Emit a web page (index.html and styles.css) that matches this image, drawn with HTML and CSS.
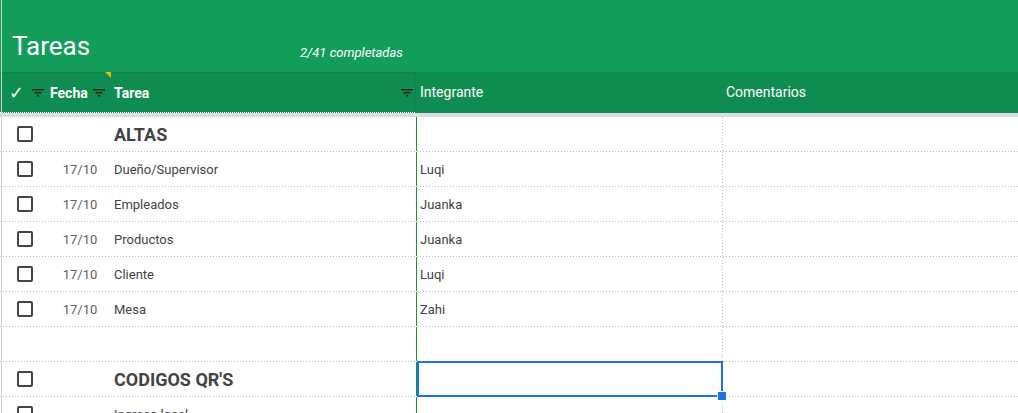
FILE: index.html
```html
<!DOCTYPE html>
<html lang="es">
<head>
<meta charset="utf-8">
<title>Tareas</title>
<link rel="stylesheet" href="styles.css">
</head>
<body>
<div class="sheet">
  <div class="topbar">
    <div class="title">Tareas</div>
    <div class="count">2/41 completadas</div>
  </div>
  <div class="head">
    <div class="frozen-head">
      <div class="hcell hc-check"><span class="tick">✓</span><svg class="filt" viewBox="0 0 12 8" width="12" height="8"><rect x="0" y="0" width="12" height="1.4"/><rect x="2.5" y="3" width="7" height="1.4"/><rect x="4.8" y="6" width="2.4" height="1.4"/></svg></div>
      <div class="hcell hc-date">Fecha<svg class="filt" viewBox="0 0 12 8" width="12" height="8"><rect x="0" y="0" width="12" height="1.4"/><rect x="2.5" y="3" width="7" height="1.4"/><rect x="4.8" y="6" width="2.4" height="1.4"/></svg><span class="note"></span></div>
      <div class="hcell hc-task">Tarea<svg class="filt" viewBox="0 0 12 8" width="12" height="8"><rect x="0" y="0" width="12" height="1.4"/><rect x="2.5" y="3" width="7" height="1.4"/><rect x="4.8" y="6" width="2.4" height="1.4"/></svg></div>
    </div>
    <div class="hcell hc-who">Integrante</div>
    <div class="hcell hc-com">Comentarios</div>
  </div>
  <div class="freeze-gap"></div>
  <div class="body">
    <div class="row"><div class="c-check"><span class="box"></span></div><div class="c-date"></div><div class="c-task section">ALTAS</div><div class="c-who"></div><div class="c-com"></div></div>
    <div class="row"><div class="c-check"><span class="box"></span></div><div class="c-date">17/10</div><div class="c-task">Dueño/Supervisor</div><div class="c-who">Luqi</div><div class="c-com"></div></div>
    <div class="row"><div class="c-check"><span class="box"></span></div><div class="c-date">17/10</div><div class="c-task">Empleados</div><div class="c-who">Juanka</div><div class="c-com"></div></div>
    <div class="row"><div class="c-check"><span class="box"></span></div><div class="c-date">17/10</div><div class="c-task">Productos</div><div class="c-who">Juanka</div><div class="c-com"></div></div>
    <div class="row"><div class="c-check"><span class="box"></span></div><div class="c-date">17/10</div><div class="c-task">Cliente</div><div class="c-who">Luqi</div><div class="c-com"></div></div>
    <div class="row"><div class="c-check"><span class="box"></span></div><div class="c-date">17/10</div><div class="c-task">Mesa</div><div class="c-who">Zahi</div><div class="c-com"></div></div>
    <div class="row"><div class="c-check"></div><div class="c-date"></div><div class="c-task"></div><div class="c-who"></div><div class="c-com"></div></div>
    <div class="row"><div class="c-check"><span class="box"></span></div><div class="c-date"></div><div class="c-task section">CODIGOS QR'S</div><div class="c-who selected"></div><div class="c-com"></div></div>
    <div class="row"><div class="c-check"><span class="box"></span></div><div class="c-date"></div><div class="c-task">Ingreso local</div><div class="c-who"></div><div class="c-com"></div></div>
  </div>
</div>
</body>
</html>
```

FILE: styles.css
```css
* { box-sizing: border-box; }
html, body { margin: 0; padding: 0; background: #fff; }
body {
  font-family: Roboto, "Liberation Sans", Arial, sans-serif;
  width: 1018px;
  height: 413px;
  overflow: hidden;
}
.sheet { position: relative; width: 1018px; }
.sheet::after {
  content: "";
  position: absolute;
  left: 1px; top: 0; bottom: 0;
  width: 1px;
  background: #c7d8cc;
}

.topbar {
  height: 72px;
  background: #129e5a;
  color: #fff;
  display: grid;
  grid-template-columns: 288px auto;
  align-items: end;
  padding: 0 0 11px 12px;
}
.title { font-size: 26px; line-height: 30px; font-weight: 400; }
.count { font-size: 13px; line-height: 16px; font-style: italic; font-weight: 400; }

.head {
  display: grid;
  grid-template-columns: 416px 306px 1fr;
  height: 41px;
  background: #0f8d50;
  color: #fff;
  font-size: 14px;
}
.frozen-head {
  display: grid;
  grid-template-columns: 50px 60px 306px;
  border-top: 1px solid #17804a;
  border-right: 1px solid #17804a;
  background-image: linear-gradient(to right, #ffffff 1px, transparent 1px);
  background-size: 2px 1px;
  background-repeat: repeat-x;
  background-position: left bottom;
}
.hcell {
  display: flex;
  align-items: center;
  height: 40px;
  position: relative;
}
.frozen-head .hcell { height: 39px; font-weight: 700; }
.filt { fill: #1c1c1c; margin-left: auto; flex: none; }
.hc-check { padding: 0 6px 0 9px; }
.tick { font-family: "DejaVu Sans", sans-serif; font-weight: 700; font-size: 18px; line-height: 20px; }
.hc-date { padding: 0 5px 0 0; }
.hc-task { padding: 0 3px 0 4px; }
.hc-who { padding-left: 4px; }
.hc-com { padding-left: 4px; }
.note {
  position: absolute;
  top: -1px; right: -1px;
  width: 0; height: 0;
  border-top: 6px solid #f6b400;
  border-left: 6px solid transparent;
}

.freeze-gap { height: 4px; background: #dcdee4; }

.body { color: #434343; font-size: 13px; }
.row {
  display: grid;
  grid-template-columns: 50px 60px 306px 306px 1fr;
  height: 35px;
  background-image: linear-gradient(to right, #bdbdbd 1px, transparent 1px);
  background-size: 3px 1px;
  background-repeat: repeat-x;
  background-position: left bottom;
}
.row > div {
  height: 34px;
  display: flex;
  align-items: center;
  white-space: nowrap;
}
.c-check { justify-content: center; }
.box {
  width: 16px; height: 16px;
  border: 2px solid #444;
  border-radius: 2px;
}
.c-date { justify-content: center; color: #5f5f5f; }
.c-task { padding-left: 4px; }
.section { font-size: 18px; font-weight: 700; }
.c-who { border-left: 1px solid #1e8e3e; padding-left: 3px; position: relative; }
.c-com {
  padding-left: 4px;
  background-image: linear-gradient(#bdbdbd 1px, transparent 1px);
  background-size: 1px 3px;
  background-repeat: repeat-y;
  background-position: left top;
}
.row > .c-com { height: 35px; }
.selected::after {
  content: "";
  position: absolute;
  top: -1px; left: 0; right: -1px; bottom: -1px;
  border: 2px solid #1a73e8;
}
.selected::before {
  content: "";
  position: absolute;
  right: -5px; bottom: -5px;
  width: 8px; height: 8px;
  background: #1a73e8;
  border: 1px solid #fff;
  z-index: 2;
}
```
